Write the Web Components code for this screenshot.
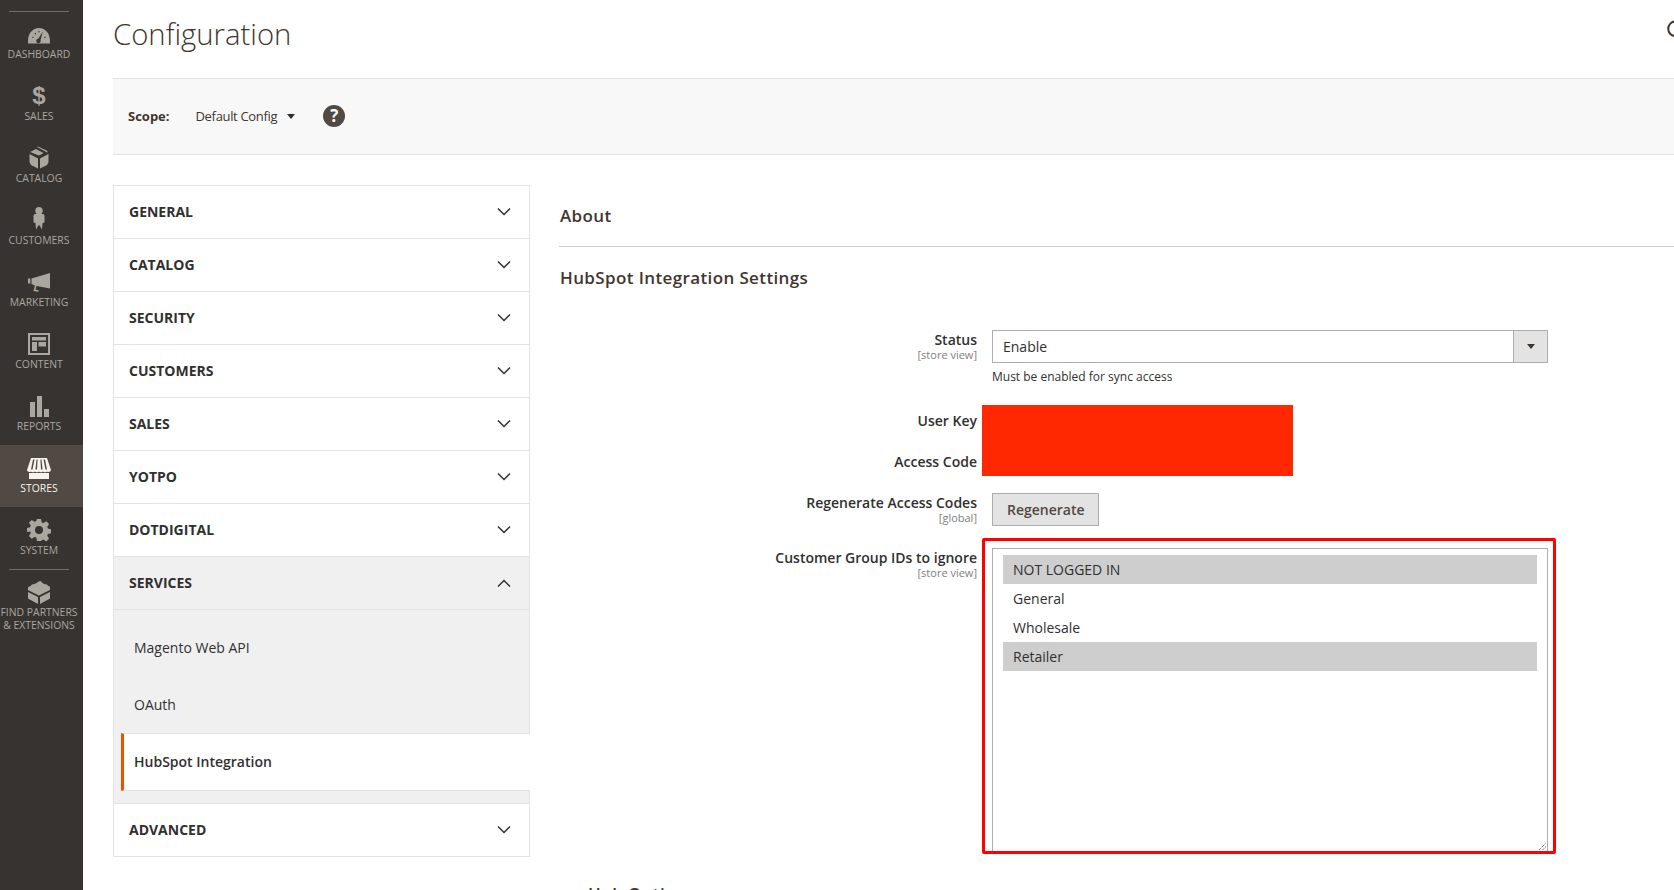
<!doctype html>
<html>
<head>
<meta charset="utf-8">
<title>Configuration</title>
<style>
  html, body { margin: 0; height: 100%; overflow: hidden; background: #fff; }
  body { font-family: "Open Sans", sans-serif; color: #303030; }
  admin-page { height: 890px; }
</style>
</head>
<body>
<admin-page>
  <admin-menu slot="menu">
    <menu-item label="Dashboard">
      <svg viewBox="0 0 24 20" width="24" height="20"><path fill-rule="evenodd" d="M1 19.500V17C1 9.500 5.500 4 12 4s11 5.500 11 13v2.500zM15.800 7.500l-4.500 7.200a2.200 2.200 0 1 0 2.200 1.400zM5 13.300l1.400.8.500-.9-1.400-.8zM7.500 9.500l1 1.200.8-.7-1-1.200zM11.500 6.800v1.700h1V6.800zM18.400 12.400l-1.400.8.500.9 1.400-.8z"/></svg>
    </menu-item>
    <menu-item label="Sales">
      <span class="glyph" style="font:700 24px/26px 'Liberation Sans',sans-serif">$</span>
    </menu-item>
    <menu-item label="Catalog">
      <svg viewBox="0 0 24 24" width="24" height="24"><path d="M3 6.500 9 3.500l7.500 4-2.500 1.500-2 1zM11 1l-1 .5 7.500 4L20 7l1-.5-1.500-1.500zM2.500 8.500l8.500 4.500v10l-7-3.500-1.500-3zM21.500 8.500 13 13v10l7-3.500 1.500-3z" transform="translate(0 -.5)"/></svg>
    </menu-item>
    <menu-item label="Customers">
      <svg viewBox="0 0 24 26" width="24" height="26"><circle cx="12" cy="3.800" r="3.700"/><path d="M7.500 8.500h9l1 1.500v7l-2 .5-.5 6.500-1.500-2.500-.5-1.500h-2l-.5 1.500-1.500 2.500-.5-6.500-2-.5v-7z" transform="translate(0 -1.500)"/></svg>
    </menu-item>
    <menu-item label="Marketing">
      <svg viewBox="0 0 24 24" width="24" height="24"><path d="M23 3v15.500L11 16.300l-1.500-.5-1 4 3 .5v1.500l-5-.7 1.400-5.600L4.500 14V8.500zM1 8.500h2.300v5H1z"/></svg>
    </menu-item>
    <menu-item label="Content">
      <svg viewBox="0 0 24 24" width="24" height="24"><path fill-rule="evenodd" d="M1 1h22v22H1zM3 3v18h18V3zM5 5h14v3.500H5zM5 10h5v9H5zM11.500 10H19v4.500h-7.500z"/></svg>
    </menu-item>
    <menu-item label="Reports">
      <svg viewBox="0 0 24 24" width="24" height="24"><path d="M3 8h5v15H3zM10 2h5v21h-5zM17 15h5v8h-5z"/></svg>
    </menu-item>
    <menu-item label="Stores" active>
      <svg viewBox="0 0 26 24" width="26" height="24"><path fill-rule="evenodd" d="M5 2h16l4 12a2.500 2.500 0 0 1-4 1.400 3 3 0 0 1-4 0 3 3 0 0 1-4 0 3 3 0 0 1-4 0 3 3 0 0 1-4 0A2.500 2.500 0 0 1 1 14zM7 3.500 5 13.500h1.500L8.500 3.500zM10.500 3.500l-1 10H11l.6-10zM14.400 3.500l.6 10h1.500l-1-10zM17.500 3.500l2 10H21l-2-10zM3 17h20v6H3z"/></svg>
    </menu-item>
    <menu-item label="System">
      <svg viewBox="0 0 24 24" width="24" height="24"><path fill-rule="evenodd" d="M10 1h4l.7 3.400 1.700.7 2.900-1.900 2.800 2.800-1.900 2.900.7 1.700 3.100.7v4l-3.100.7-.7 1.700 1.900 2.900-2.800 2.800-2.900-1.900-1.700.7L14 23h-4l-.7-3.400-1.700-.7-2.900 1.900-2.800-2.800 1.900-2.900-.7-1.700L0 14v-4l3.100-.7.700-1.700-1.900-2.900 2.800-2.800 2.900 1.900 1.700-.7zM12 8a4 4 0 1 0 0 8 4 4 0 0 0 0-8z"/></svg>
    </menu-item>
    <menu-rule></menu-rule>
    <menu-item label="Find Partners &amp; Extensions" wide>
      <svg viewBox="0 0 24 24" width="24" height="24"><path d="M1 12l10 5v7L1 18.500zM23 12l-10 5v7l10-5.500zM12 1c1.700 0 3 .6 3 1.500l-.1.300 3 1.500c1.700 0 3 .6 3 1.500l2 1v3.200l-11 5.500-11-5.500V7.300l3-1.500c0-.9 1.300-1.500 3-1.500l3.100-1.500c0-.7 1.300-1.300 3-1.300z"/></svg>
    </menu-item>
  </admin-menu>

  <page-title>Configuration</page-title>
  <scope-bar></scope-bar>

  <config-layout>
    <config-nav slot="nav">
      <nav-section label="General"></nav-section>
      <nav-section label="Catalog"></nav-section>
      <nav-section label="Security"></nav-section>
      <nav-section label="Customers"></nav-section>
      <nav-section label="Sales"></nav-section>
      <nav-section label="Yotpo"></nav-section>
      <nav-section label="Dotdigital"></nav-section>
      <nav-section label="Services" open>
        <nav-link>Magento Web API</nav-link>
        <nav-link>OAuth</nav-link>
        <nav-link current>HubSpot Integration</nav-link>
      </nav-section>
      <nav-section label="Advanced"></nav-section>
    </config-nav>

    <config-panel>
      <section-title ruled>About</section-title>
      <section-title>HubSpot Integration Settings</section-title>

      <form-row label="Status" scope="[store view]">
        <select-box>Enable</select-box>
        <div slot="note">Must be enabled for sync access</div>
      </form-row>

      <redacted-rows>
        <form-row label="User Key" slot="labels" style="height:41px"></form-row>
        <form-row label="Access Code" slot="labels" style="height:24px"></form-row>
      </redacted-rows>

      <form-row label="Regenerate Access Codes" scope="[global]" style="margin-top:17px">
        <admin-button>Regenerate</admin-button>
      </form-row>

      <form-row label="Customer Group IDs to ignore" scope="[store view]" style="margin-top:12px" flush>
        <marked-box>
          <multi-select>
            <multi-option selected>NOT LOGGED IN</multi-option>
            <multi-option>General</multi-option>
            <multi-option>Wholesale</multi-option>
            <multi-option selected>Retailer</multi-option>
          </multi-select>
        </marked-box>
      </form-row>

      <section-title sub>Hub Options</section-title>
    </config-panel>
  </config-layout>
</admin-page>

<script>
function define(name, css, html, init) {
  customElements.define(name, class extends HTMLElement {
    constructor() {
      super();
      this.attachShadow({ mode: 'open' }).innerHTML = '<style>' + css + '</style>' + html;
      if (init) init(this);
    }
  });
}

define('admin-page', `
  :host { display: flex; align-items: stretch; overflow: hidden; }
  main { flex: 1; min-width: 0; padding-left: 30px; }
`, `<slot name="menu"></slot><main><slot></slot></main>`);

define('admin-menu', `
  :host { display: block; flex: none; width: 83px; background: #373330; padding-top: 11px; box-sizing: border-box; }
  .rule { height: 1px; width: 60px; margin: 0 0 -1px 9px; background: #736d67; }
`, `<div class="rule"></div><slot></slot>`);

define('menu-rule', `
  :host { display: block; height: 1px; width: 60px; margin: 0 0 -1px 9px; background: #736d67; }
`, ``);

define('menu-item', `
  :host { display: flex; flex-direction: column; align-items: center; width: 78px; height: 62px; box-sizing: border-box; padding-top: 10px;
    color: #aaa6a0; fill: #aaa6a0; }
  :host([active]) { width: 83px; padding-right: 5px; background: #514943; color: #f7f3eb; fill: #f7f3eb; }
  :host([wide]) { height: 72px; }
  .icon { height: 26px; display: flex; align-items: center; justify-content: center; }
  .label { font-size: 10.400px; line-height: 13px; margin-top: 1px; text-align: center; text-transform: uppercase; white-space: nowrap; }
`, `<div class="icon"><slot></slot></div><div class="label"></div>`, el => {
  const label = el.getAttribute('label');
  const box = el.shadowRoot.querySelector('.label');
  if (label.includes('&')) box.innerHTML = 'Find Partners<br>&amp; Extensions';
  else box.textContent = label;
});

define('page-title', `
  :host { display: flex; justify-content: space-between; align-items: flex-start; height: 78px; font-size: 29.300px; font-weight: 300; line-height: 36px; padding-top: 16px; box-sizing: border-box; color: #41362f; }
  svg { display: block; margin-top: 4px; }
`, `<span><slot></slot></span><svg width="7" height="18" viewBox="0 0 7 18"><circle cx="8.500" cy="8.800" r="7.300" fill="none" stroke="#41362f" stroke-width="2"/></svg>`);

define('scope-bar', `
  :host { display: flex; align-items: center; height: 77px; box-sizing: border-box; background: #f8f8f8;
    border-top: 1px solid #e3e3e3; border-bottom: 1px solid #e3e3e3; padding: 0 0 2px 15px; font-size: 13px; color: #41362f; }
  b { font-weight: 700; margin-right: 26px; }
  .val { letter-spacing: -.33px; }
  .arrow { width: 0; height: 0; border: 4.500px solid transparent; border-top: 5px solid #303030; border-bottom: 0; margin: 2px 0 0 10px; }
  .help { width: 22px; height: 22px; border-radius: 50%; background: #514943; color: #fff; font-weight: 700; font-size: 17px;
    line-height: 22px; text-align: center; margin-left: 28px; }
`, `<b>Scope:</b><span class="val">Default Config</span><span class="arrow"></span><span class="help">?</span>`);

define('config-layout', `
  :host { display: flex; margin-top: 30px; align-items: flex-start; }
`, `<slot name="nav"></slot><slot></slot>`);

define('config-nav', `
  :host { display: block; flex: none; width: 417px; box-sizing: border-box; border: 1px solid #e3e3e3; }
`, `<slot></slot>`);

define('nav-section', `
  :host { display: block; }
  .head { display: flex; align-items: center; justify-content: space-between; height: 53px; box-sizing: border-box;
    padding: 0 18px 2px 15px; font-size: 14px; font-weight: 700; text-transform: uppercase; color: #303030; border-bottom: 1px solid #e3e3e3; }
  :host(:last-child) .head { height: 52px; border-bottom: 0; }
  svg { display: block; }
  .kids { display: none; background: #f0f0f0; padding: 9px 0 12px; border-bottom: 1px solid #e3e3e3; }
  :host([open]) .head { background: #f0f0f0; }
  :host([open]) .kids { display: block; }
  :host([open]) svg { transform: translateY(1px) rotate(180deg); }
`, `<div class="head"><span class="name"></span><svg width="14" height="9" viewBox="0 0 14 9"><path d="M1 1.500l6 6 6-6" fill="none" stroke="#303030" stroke-width="1.500"/></svg></div><div class="kids"><slot></slot></div>`, el => {
  el.shadowRoot.querySelector('.name').textContent = el.getAttribute('label');
});

define('nav-link', `
  :host { display: flex; align-items: center; height: 57px; box-sizing: border-box; padding-left: 20px; font-size: 14px; color: #303030; }
  :host([current]) { height: 58px; background: #fff; font-weight: 600; border-left: 3px solid #eb5202; margin-left: 7px; margin-right: -1px; padding: 0 0 2px 10px;
    border-top: 1px solid #e3e3e3; border-bottom: 1px solid #e3e3e3; }
`, `<slot></slot>`);

define('config-panel', `
  :host { display: block; flex: 1; min-width: 0; padding: 0 0 0 29px; }
`, `<slot></slot>`);

define('section-title', `
  :host { display: block; font-size: 17px; font-weight: 600; color: #41362f; letter-spacing: .38px; line-height: 24px; padding: 19px 0 0 1px; height: 83px; box-sizing: border-box; }
  :host([ruled]) { height: 62px; border-bottom: 1px solid #cccccc; }
  :host([sub]) { padding: 0 0 0 29px; margin-top: 28px; height: 30px; }
`, `<slot></slot>`);

define('form-row', `
  :host { display: grid; grid-template-columns: 418px 1fr; column-gap: 15px; }
  .label { text-align: right; font-size: 14px; font-weight: 600; line-height: 20px; color: #303030; }
  :host([flush]) .label { padding-top: 10px; }
  .scope { text-align: right; font-size: 11px; font-weight: 400; line-height: 11px; margin-top: -1px; color: #808080; }
  ::slotted([slot=note]) { font-size: 12px; line-height: 16px; margin-top: 6px; color: #303030; }
`, `<div><div class="label"></div><div class="scope"></div></div><div><slot></slot><slot name="note"></slot></div>`, el => {
  el.shadowRoot.querySelector('.label').textContent = el.getAttribute('label');
  el.shadowRoot.querySelector('.scope').textContent = el.getAttribute('scope') || '';
});

define('select-box', `
  :host { display: flex; width: 556px; height: 33px; box-sizing: border-box; border: 1px solid #adadad; font-size: 14px; color: #303030; }
  .val { flex: 1; line-height: 31px; padding-left: 10px; }
  .btn { width: 33px; background: #e3e3e3; border-left: 1px solid #adadad; display: flex; align-items: center; justify-content: center; }
  .btn i { width: 0; height: 0; border: 4px solid transparent; border-top: 5px solid #41362f; border-bottom: 0; }
`, `<div class="val"><slot></slot></div><div class="btn"><i></i></div>`);

define('redacted-rows', `
  :host { display: block; position: relative; height: 71px; margin-top: 20px; }
  .labels { padding-top: 6px; }
  .mask { position: absolute; left: 423px; top: 0; width: 311px; height: 71px; background: #ff2800; }
`, `<div class="labels"><slot name="labels"></slot></div><div class="mask"></div>`);

define('admin-button', `
  :host { display: inline-block; height: 33px; box-sizing: border-box; border: 1px solid #adadad; background: #e3e3e3; color: #514943;
    font-size: 14px; font-weight: 600; line-height: 31px; padding: 0 13px 0 14px; vertical-align: top; }
`, `<slot></slot>`);

define('marked-box', `
  :host { display: block; width: 574px; height: 316px; box-sizing: border-box; border: 3px solid #ff0000; border-radius: 2px; margin-left: -10px; padding: 7px 5px 0 7px; overflow: hidden; }
`, `<slot></slot>`);

define('multi-select', `
  :host { display: block; position: relative; width: 556px; height: 310px; box-sizing: border-box; border: 1px solid #adadad; padding: 6px 10px; }
  .grip { position: absolute; right: 1px; top: 294px; }
`, `<slot></slot><svg class="grip" width="7" height="7" viewBox="0 0 7 7"><path d="M0 7l7-7M3.500 7L7 3.500" stroke="#555" stroke-width="1" stroke-dasharray="1 1" fill="none"/></svg>`);

define('multi-option', `
  :host { display: block; height: 29px; font-size: 14px; line-height: 29px; padding-left: 10px; color: #303030; }
  :host([selected]) { background: #cecece; }
`, `<slot></slot>`);
</script>
</body>
</html>
